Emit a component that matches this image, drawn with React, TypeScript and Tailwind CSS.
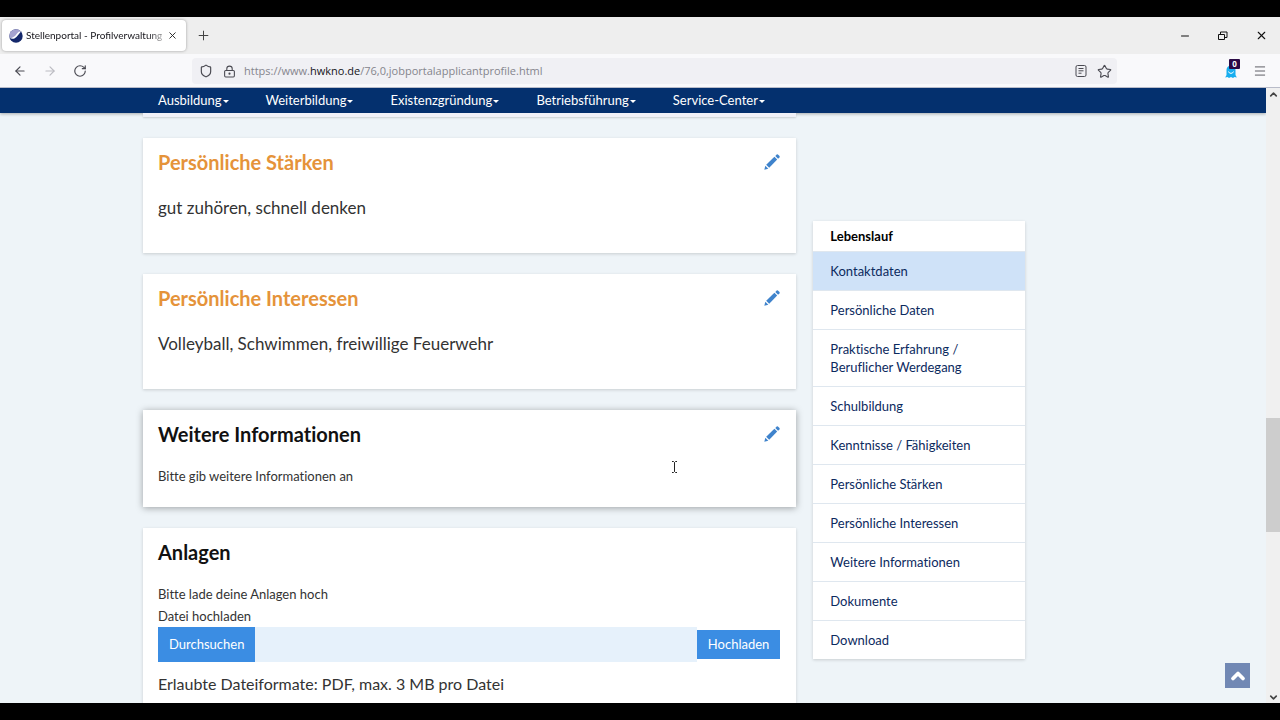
import type { ReactNode } from "react";
import { ArrowLeft, ArrowRight, ChevronDown, ChevronUp, LockKeyhole, Menu, Minus, Plus, RotateCw, Shield, Star, X } from "lucide-react";

const navItems = ["Ausbildung", "Weiterbildung", "Existenzgründung", "Betriebsführung", "Service-Center"];

const sections = [
  "Kontaktdaten",
  "Persönliche Daten",
  "Praktische Erfahrung / Beruflicher Werdegang",
  "Schulbildung",
  "Kenntnisse / Fähigkeiten",
  "Persönliche Stärken",
  "Persönliche Interessen",
  "Weitere Informationen",
  "Dokumente",
  "Download",
];

function Favicon() {
  return (
    <svg viewBox="0 0 14 14" className="size-3.5 shrink-0" aria-hidden="true">
      <circle cx="7" cy="7" r="6.7" fill="#14286b" />
      <path d="M0.3 7A6.7 6.7 0 0 1 12 2.6C9.5 3 8.6 6.8 5.4 8.2 3.5 9 1.5 9 0.5 8.6Z" fill="#a5a3cf" />
      <path d="M12 2.6C9.5 5 8.6 8.2 5.4 9.4 3.5 10 1.8 9.6 0.6 8.8 3 8.8 5 8 6.5 6.5 8.3 4.5 9.5 2 12 2.6Z" fill="#fff" />
    </svg>
  );
}

function Pencil() {
  return (
    <svg viewBox="0 0 16 16" className="size-4" fill="#3f83cc" aria-hidden="true">
      <path d="M0.3 15.7 1.3 11.7 4.3 14.7Z" />
      <path d="M2.2 10.8 10.4 2.8 13.2 5.6 5.2 13.8Z" />
      <path d="M11.3 1.9 12.7 0.5Q13.3 0 13.9 0.5L15.5 2.1Q16 2.7 15.5 3.3L14.1 4.7Z" />
    </svg>
  );
}

function BrowserChrome() {
  return (
    <header className="shrink-0 font-['Open_Sans',sans-serif]">
      <div className="flex h-[37px] items-center bg-[#eeeeee]">
        <div className="ml-0.5 flex h-[31px] w-[184px] items-center gap-[3px] rounded-sm bg-white pl-[7px] shadow-[0_0_3px_rgba(0,0,0,0.35)]">
          <Favicon />
          <span className="min-w-0 flex-1 bg-linear-to-r from-[#15141a] from-88% to-[#bbb] bg-clip-text font-[Lato,sans-serif] text-[10px] whitespace-nowrap text-transparent">
            Stellenportal - Profilverwaltung
          </span>
          <button type="button" aria-label="Tab schließen" className="mr-2 text-[#222]">
            <X size={11} strokeWidth={2} />
          </button>
        </div>
        <button type="button" aria-label="Neuer Tab" className="ml-2.5 text-[#444]">
          <Plus size={15} strokeWidth={1.6} />
        </button>
        <div className="ml-auto flex items-center gap-[26px] pr-3 text-[#111]">
          <button type="button" aria-label="Minimieren">
            <Minus size={12} strokeWidth={2} />
          </button>
          <button type="button" aria-label="Verkleinern">
            <svg viewBox="0 0 12 12" className="size-3" fill="none" stroke="currentColor">
              <path d="M1.5 4.5h6v5h-6zM3.5 4V2h6.5v5.5H8" />
            </svg>
          </button>
          <button type="button" aria-label="Schließen">
            <X size={13} strokeWidth={2} />
          </button>
        </div>
      </div>
      <div className="flex h-[34px] items-center border-b border-[#b9bcc9] bg-[#f9f9fb] pt-px text-[#4a4a52]">
        <div className="flex w-48 items-center gap-4 pl-[13px]">
          <button type="button" aria-label="Zurück">
            <ArrowLeft size={14} strokeWidth={2} />
          </button>
          <button type="button" aria-label="Vor" className="text-[#bcbcc2]">
            <ArrowRight size={14} strokeWidth={2} />
          </button>
          <button type="button" aria-label="Neu laden">
            <RotateCw size={14} strokeWidth={2} />
          </button>
        </div>
        <div className="flex h-[26px] flex-1 items-center gap-2 rounded-sm bg-[#f0f0f4] pr-[5px] pl-[7px]">
          <div className="flex items-center gap-2.5">
            <Shield size={14} strokeWidth={2} />
            <LockKeyhole size={13} strokeWidth={2} />
          </div>
          <div role="textbox" aria-label="Adresse" className="flex-1 text-[11px] text-[#85858d]">
            https://www.<span className="text-[#15141a]">hwkno.de</span>/76,0,jobportalapplicantprofile.html
          </div>
          <div className="flex items-center gap-2.5">
            <svg viewBox="0 0 12 12" className="size-3" fill="none" stroke="currentColor">
              <rect x="1" y="0.5" width="10" height="11" rx="1.5" />
              <path d="M3.5 3.5h5M3.5 5.8h5M3.5 8.2h3" />
            </svg>
            <Star size={15} strokeWidth={1.8} />
          </div>
        </div>
        <div className="flex w-[163px] items-center justify-end gap-4 pr-[13px]">
          <button type="button" aria-label="Ghostery" className="relative">
            <svg viewBox="0 0 12 13" className="h-[13px] w-3" aria-hidden="true">
              <path d="M1.5 5a4.5 4.5 0 0 1 9 0v5l1.3 2.5-2.3-.6-1.5 1-2-1-2 1-1.5-1-2.3.6 1.3-2.5Z" fill="#18aeef" />
              <path d="M3.5 6.5a2.6 2.6 0 0 0 5 0" fill="none" stroke="#fff" />
            </svg>
            <span className="absolute -top-1.5 left-1 h-2.5 w-[11px] rounded-[1px] bg-[#2b0a45] text-center text-[8px] leading-[10px] font-bold text-white">
              0
            </span>
          </button>
          <button type="button" aria-label="Menü">
            <Menu size={14} strokeWidth={1.5} />
          </button>
        </div>
      </div>
    </header>
  );
}

type CardProps = {
  title: string;
  filled?: boolean;
  raised?: boolean;
  editable?: boolean;
  children: ReactNode;
};

function Card({ title, filled, raised, editable = true, children }: CardProps) {
  return (
    <section
      className={`bg-white pt-2.5 pr-4 pl-[15px] ${
        raised ? "shadow-[0_1px_7px_rgba(0,0,0,0.35)]" : "shadow-[0_1px_3px_rgba(0,0,0,0.16)]"
      }`}
    >
      <div className="flex items-center justify-between">
        <h2 className={`text-[20px] leading-7 font-bold ${filled ? "text-[#e5933a]" : "text-[#111]"}`}>{title}</h2>
        {editable && (
          <button type="button" aria-label={`${title} bearbeiten`}>
            <Pencil />
          </button>
        )}
      </div>
      {children}
    </section>
  );
}

function Scrollbar() {
  return (
    <div className="flex w-3.5 shrink-0 flex-col items-center bg-[#f0f0f0] pt-px text-[#444]" aria-hidden="true">
      <ChevronUp size={11} strokeWidth={3.5} />
      <div className="flex-[318]" />
      <div className="w-full flex-[114] bg-[#cdcdcd]" />
      <div className="flex-[160]" />
      <ChevronDown size={11} strokeWidth={3.5} />
    </div>
  );
}

export default function App() {
  return (
    <div className="flex h-screen flex-col overflow-hidden bg-black py-[17px]">
      <BrowserChrome />
      <div className="flex min-h-0 flex-1 bg-[#eef4f8] font-[Lato,sans-serif] text-[#333] [font-variant-ligatures:none]">
        <div className="relative min-w-0 flex-1 overflow-hidden">
          <nav className="bg-[#04306e] shadow-[0_1px_3px_rgba(0,0,0,0.3)]">
            <ul className="mx-auto flex h-[25px] max-w-[980px] items-center gap-[37px] pl-[15px] text-[13px] text-white">
              {navItems.map((item) => (
                <li key={item}>
                  <a href="#" className="flex items-center gap-px">
                    {item}
                    <span className="mt-0.5 border-x-[3px] border-t-[3px] border-x-transparent border-t-white" />
                  </a>
                </li>
              ))}
            </ul>
          </nav>

          <div className="mx-auto flex max-w-[980px] items-start gap-[17px]">
            <main className="flex w-2/3 flex-col gap-[21px]">
              {/* unterer Rand der vorherigen Karte */}
              <div className="h-1 bg-[#f0f1f8] shadow-[0_1px_2px_rgba(0,0,0,0.15)]" />
              <Card title="Persönliche Stärken" filled>
                <p className="pt-5 pb-[33px] text-[17px] leading-6">gut zuhören, schnell denken</p>
              </Card>
              <Card title="Persönliche Interessen" filled>
                <p className="pt-5 pb-[33px] text-[17px] leading-6">Volleyball, Schwimmen, freiwillige Feuerwehr</p>
              </Card>
              <Card title="Weitere Informationen" raised>
                <p className="pt-4 pb-[19px] text-[13px] leading-6">Bitte gib weitere Informationen an</p>
              </Card>
              <Card title="Anlagen" editable={false}>
                <p className="pt-4 text-[13px] leading-6">Bitte lade deine Anlagen hoch</p>
                <label htmlFor="datei" className="block text-[13px] leading-[21px]">
                  Datei hochladen
                </label>
                <div className="flex items-center text-[13px]">
                  <button type="button" className="h-[35px] bg-[#3b8de3] px-[11px] text-white">
                    Durchsuchen
                  </button>
                  <input id="datei" type="text" readOnly className="h-[35px] min-w-0 flex-1 bg-[#e6f1fb]" />
                  <button type="button" className="h-[29px] bg-[#3b8de3] px-[11px] text-white">
                    Hochladen
                  </button>
                </div>
                <p className="pt-2.5 pb-10 text-[16px] leading-6">Erlaubte Dateiformate: PDF, max. 3 MB pro Datei</p>
              </Card>
            </main>

            <aside className="mt-[108px] w-[212px] bg-white text-[13px] shadow-[0_1px_3px_rgba(0,0,0,0.16)]">
              <h3 className="px-[17px] py-1.5 leading-[18px] font-bold text-black">Lebenslauf</h3>
              <ul>
                {sections.map((name, i) => (
                  <li key={name} className="border-t border-[#dfe7ef]">
                    <a
                      href="#"
                      className={`block py-2.5 pr-8 pl-[17px] leading-[18px] text-[#0c2a5e] ${i === 0 ? "bg-[#cfe2f8]" : ""}`}
                    >
                      {name}
                    </a>
                  </li>
                ))}
              </ul>
            </aside>
          </div>

          <button
            type="button"
            aria-label="Nach oben"
            className="absolute right-4 bottom-[15px] flex size-[25px] items-center justify-center bg-[#7188b4] text-white"
          >
            <ChevronUp size={20} strokeWidth={4.5} />
          </button>

          {/* Textcursor */}
          <svg viewBox="0 0 7 12" className="absolute top-[373px] left-[671px] h-3 w-[7px]" fill="none" stroke="#222" aria-hidden="true">
            <path d="M1 .5h1.5l1 1 1-1H6M3.5 1.5v9M1 11.5h1.5l1-1 1 1H6" />
          </svg>
        </div>
        <Scrollbar />
      </div>
    </div>
  );
}
